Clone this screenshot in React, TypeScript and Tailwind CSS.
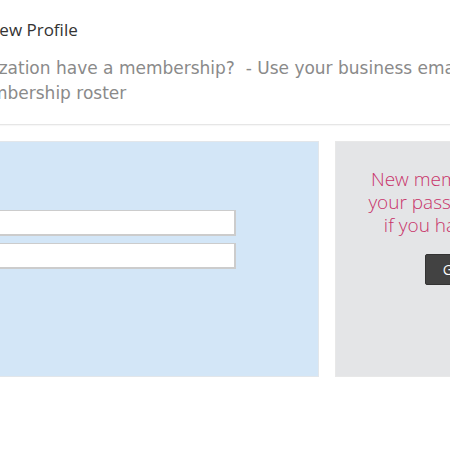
export default function App() {
  return (
    <div className="w-[450px] h-[450px] overflow-hidden bg-white">
      <div className="w-[900px] -ml-[240px]">
        {/* page header */}
        <div className="pt-[18px] pb-[18px] border-b border-[#e6e6e6] shadow-[0_1px_1px_rgba(0,0,0,0.03)]">
          <h1 className="whitespace-nowrap pl-[156px] text-[17px] leading-[24px] text-[#333] font-['Open_Sans',sans-serif]">
            Create a New Profile
          </h1>
          <div className="mt-[14px] font-['DejaVu_Sans',Verdana,sans-serif] text-[17px] leading-[25px] text-[#8a8a8a] whitespace-nowrap">
            <div className="pl-[93px]">
              Does your organization have a membership?&nbsp; - Use your business email address to log in
            </div>
            <div className="pl-[93px]">to check the membership roster</div>
          </div>
        </div>

        {/* panels */}
        <div className="flex gap-[16px] mt-[16px] pl-[20px]">
          <div className="w-[539px] h-[236px] bg-[#d3e6f7] border border-[#e2e6ea] flex flex-col items-end pr-[82px] pt-[68px] gap-[7px]">
            <input
              className="w-[300px] h-[26px] bg-white border border-[#cccccc] border-r-2 border-b-2 outline-none"
              type="text"
            />
            <input
              className="w-[300px] h-[26px] bg-white border border-[#cccccc] border-r-2 border-b-2 outline-none"
              type="password"
            />
          </div>
          <div className="w-[290px] h-[236px] bg-[#e4e5e7] border border-[#e8e8e8] flex flex-col items-center pt-[26px]">
            <p className="text-center font-['Open_Sans',sans-serif] font-light text-[19px] leading-[23px] text-[#c8336a] whitespace-nowrap">
              New members can set up
              <br />
              your password and sign in
              <br />
              if you have not already
            </p>
            <button className="mt-[17px] h-[31px] px-[17px] bg-[#424242] border border-[#333] rounded-[2px] text-white text-[14px] font-['Open_Sans',sans-serif]">
              Get Started
            </button>
          </div>
        </div>
      </div>
    </div>
  );
}
